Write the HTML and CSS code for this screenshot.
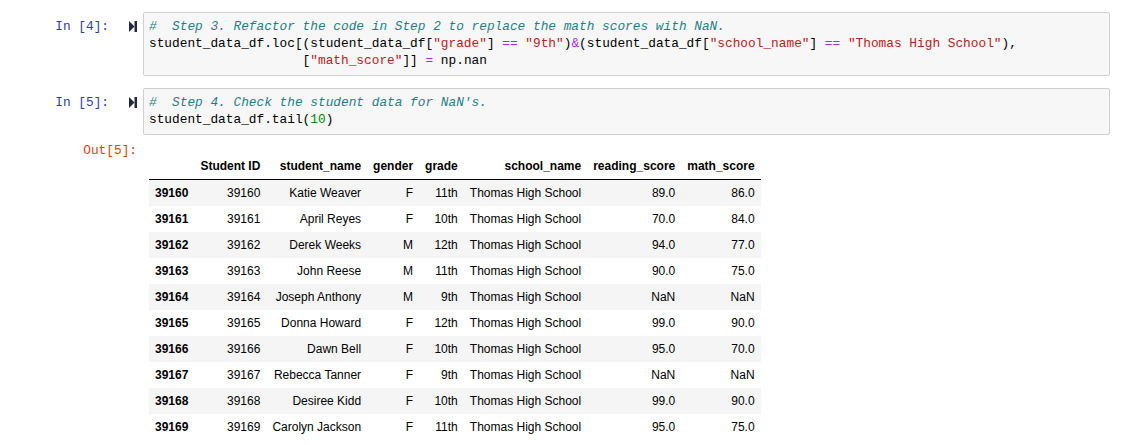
FILE: index.html
```html
<!DOCTYPE html>
<html>
<head>
<meta charset="utf-8">
<link rel="stylesheet" href="styles.css">
</head>
<body>
<div class="notebook">
  <div class="cell">
    <div class="prompt in-prompt"><span class="ptext">In [4]:</span><svg class="run" width="8" height="11" viewBox="0 0 8 11"><polygon points="0,0 5.5,5.5 0,11" fill="#23263f"/><rect x="5.5" y="0" width="2.5" height="11" fill="#23263f"/></svg></div>
    <div class="input-area"><pre class="code"><span class="c">#  Step 3. Refactor the code in Step 2 to replace the math scores with NaN.</span>
student_data_df.loc[(student_data_df[<span class="s">"grade"</span>] <span class="o">==</span> <span class="s">"9th"</span>)<span class="o">&amp;</span>(student_data_df[<span class="s">"school_name"</span>] <span class="o">==</span> <span class="s">"Thomas High School"</span>),
                    [<span class="s">"math_score"</span>]] <span class="o">=</span> np.nan</pre></div>
  </div>
  <div class="cell cell-gap">
    <div class="prompt in-prompt"><span class="ptext">In [5]:</span><svg class="run" width="8" height="11" viewBox="0 0 8 11"><polygon points="0,0 5.5,5.5 0,11" fill="#23263f"/><rect x="5.5" y="0" width="2.5" height="11" fill="#23263f"/></svg></div>
    <div class="input-area"><pre class="code"><span class="c">#  Step 4. Check the student data for NaN's.</span>
student_data_df.tail(<span class="n">10</span>)</pre></div>
  </div>
  <div class="cell output">
    <div class="prompt out-prompt"><span class="ptext">Out[5]:</span></div>
    <div class="output-area">
      <table class="df">
        <thead>
          <tr><th></th><th>Student ID</th><th>student_name</th><th>gender</th><th>grade</th><th>school_name</th><th>reading_score</th><th>math_score</th></tr>
        </thead>
        <tbody>
          <tr><th>39160</th><td>39160</td><td>Katie Weaver</td><td>F</td><td>11th</td><td>Thomas High School</td><td>89.0</td><td>86.0</td></tr>
          <tr><th>39161</th><td>39161</td><td>April Reyes</td><td>F</td><td>10th</td><td>Thomas High School</td><td>70.0</td><td>84.0</td></tr>
          <tr><th>39162</th><td>39162</td><td>Derek Weeks</td><td>M</td><td>12th</td><td>Thomas High School</td><td>94.0</td><td>77.0</td></tr>
          <tr><th>39163</th><td>39163</td><td>John Reese</td><td>M</td><td>11th</td><td>Thomas High School</td><td>90.0</td><td>75.0</td></tr>
          <tr><th>39164</th><td>39164</td><td>Joseph Anthony</td><td>M</td><td>9th</td><td>Thomas High School</td><td>NaN</td><td>NaN</td></tr>
          <tr><th>39165</th><td>39165</td><td>Donna Howard</td><td>F</td><td>12th</td><td>Thomas High School</td><td>99.0</td><td>90.0</td></tr>
          <tr><th>39166</th><td>39166</td><td>Dawn Bell</td><td>F</td><td>10th</td><td>Thomas High School</td><td>95.0</td><td>70.0</td></tr>
          <tr><th>39167</th><td>39167</td><td>Rebecca Tanner</td><td>F</td><td>9th</td><td>Thomas High School</td><td>NaN</td><td>NaN</td></tr>
          <tr><th>39168</th><td>39168</td><td>Desiree Kidd</td><td>F</td><td>10th</td><td>Thomas High School</td><td>99.0</td><td>90.0</td></tr>
          <tr><th>39169</th><td>39169</td><td>Carolyn Jackson</td><td>F</td><td>11th</td><td>Thomas High School</td><td>95.0</td><td>75.0</td></tr>
        </tbody>
      </table>
    </div>
  </div>
</div>
</body>
</html>
```
FILE: styles.css
```css
html, body {
  margin: 0;
  padding: 0;
  background: #ffffff;
}
body {
  width: 1121px;
  height: 445px;
  overflow: hidden;
}
.notebook {
  padding: 12px 11px 0 0;
}
.cell {
  display: flex;
  align-items: flex-start;
}
.cell-gap {
  margin-top: 12px;
}
.prompt {
  width: 137px;
  flex: none;
  margin-right: 6px;
  display: flex;
  justify-content: flex-end;
  align-items: center;
  font-family: "Liberation Mono", monospace;
  font-size: 12.8px;
  line-height: 17px;
}
.in-prompt {
  padding-top: 6px;
  color: #303F9F;
}
.in-prompt .ptext {
  margin-right: 20px;
}
.run {
  display: block;
}
.out-prompt {
  padding-top: 7px;
  color: #D84315;
}
.input-area {
  flex: 1;
  background: #f7f7f7;
  border: 1px solid #cfcfcf;
  border-radius: 2px;
  padding: 5px 5px 6px 5px;
}
.code {
  margin: 0;
  font-family: "Liberation Mono", monospace;
  font-size: 12.8px;
  line-height: 17px;
  color: #000;
  white-space: pre;
}
.c { color: #1f7f86; font-style: italic; }
.s { color: #BA2121; }
.o { color: #AA22FF; }
.n { color: #008800; }
.output-area {
  flex: 1;
  padding-left: 6px;
  padding-top: 18px;
}
.df {
  border-collapse: collapse;
  border-spacing: 0;
  font-family: "Liberation Sans", Arial, sans-serif;
  font-size: 12px;
  color: #000;
}
.df th, .df td {
  text-align: right;
  vertical-align: middle;
  padding: 6px;
  line-height: 14px;
  white-space: nowrap;
}
.df th {
  font-weight: bold;
}
.df thead tr {
  border-bottom: 1px solid #000;
}
.df thead th {
  vertical-align: bottom;
}
.df tbody tr:nth-child(odd) {
  background: #f5f5f5;
}
```
